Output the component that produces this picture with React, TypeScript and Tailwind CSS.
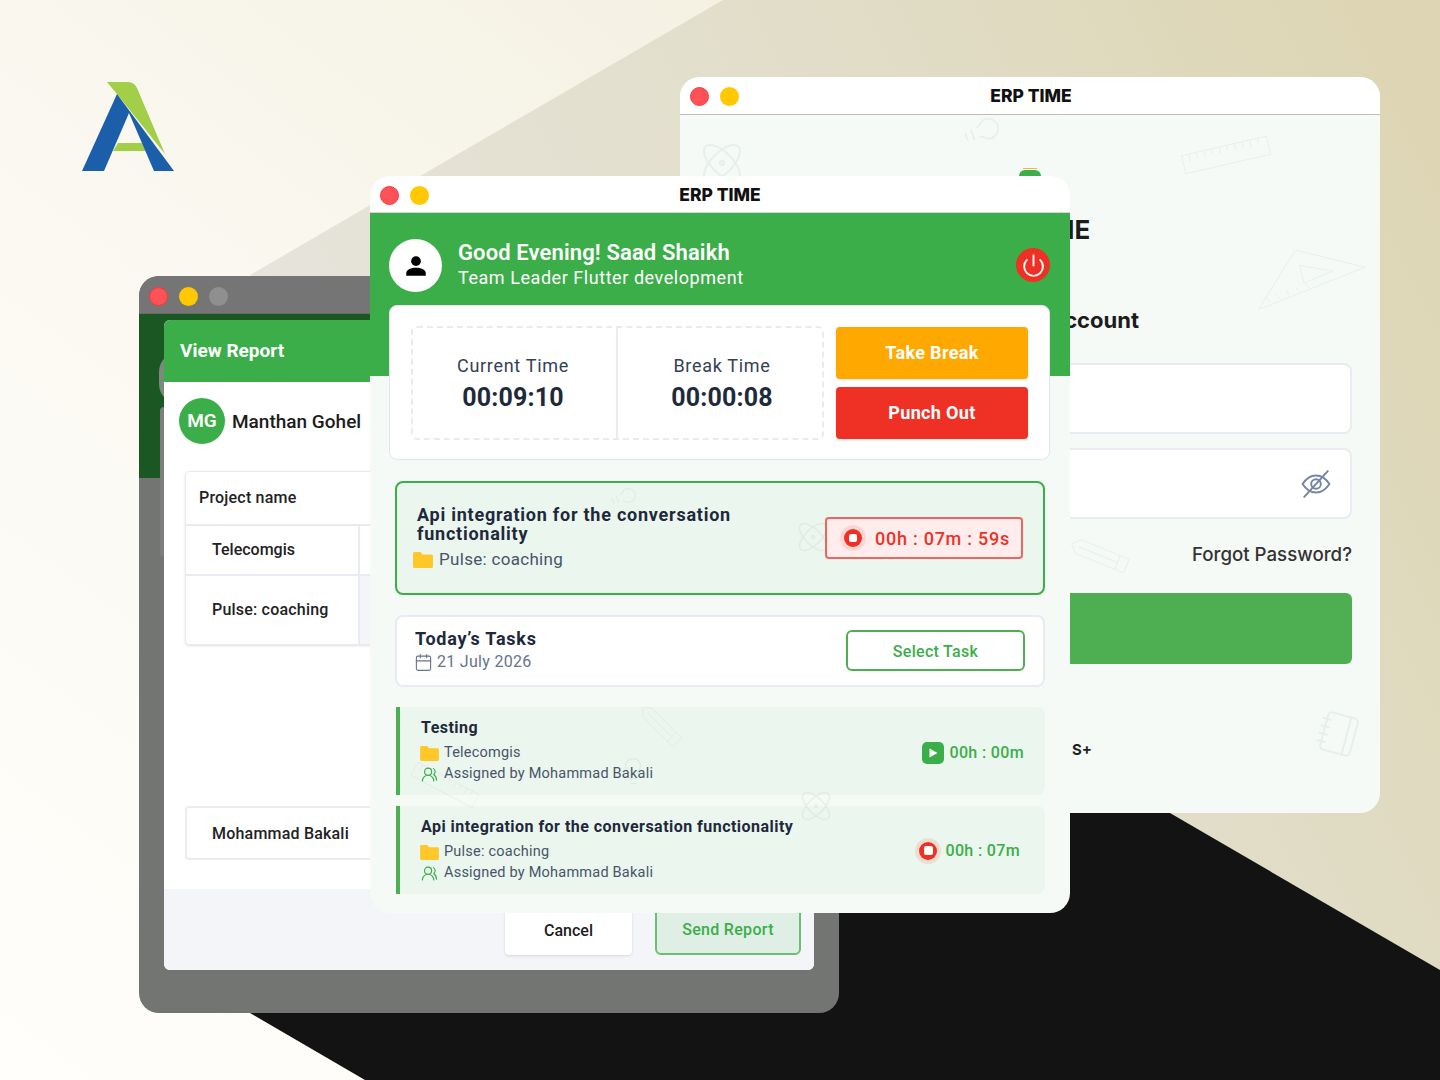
import React from 'react';
import { Atom, Calendar, Lightbulb, Notebook, Power, UsersRound } from 'lucide-react';

const plex = "font-['Roboto','Liberation_Sans',sans-serif]";

const Dots: React.FC<{ third?: boolean }> = ({ third }) => (
    <div className="flex gap-[11px]">
        <span className="w-[19px] h-[19px] rounded-full bg-[#ff5257] border border-[#f0393f]"></span>
        <span className="w-[19px] h-[19px] rounded-full bg-[#ffc801]"></span>
        {third && <span className="w-[19px] h-[19px] rounded-full bg-[#8f8f8f]"></span>}
    </div>
);

const Folder: React.FC<{ className: string }> = ({ className }) => (
    <svg viewBox="0 0 20 16" className={className}>
        <path d="M1.500 0h6l2 2.500h9A1.500 1.500 0 0 1 20 4v10.500a1.500 1.500 0 0 1-1.500 1.500h-17A1.500 1.500 0 0 1 0 14.500V1.500A1.500 1.500 0 0 1 1.500 0z" fill="#ffc727" />
    </svg>
);

const StopIcon: React.FC<{ size: string; inner: string }> = ({ size, inner }) => (
    <span className={`${size} rounded-full bg-[#ee3124] flex items-center justify-center shadow-[0_0_0_4px_rgba(238,49,36,0.12)]`}>
        <span className={`${inner} bg-white rounded-[2px]`}></span>
    </span>
);

const Doodle: React.FC<{ icon: React.ElementType; pos: string }> = ({ icon: Icon, pos }) => (
    <Icon className={`absolute pointer-events-none text-[#7f9488] opacity-[0.1] ${pos}`} strokeWidth={1} />
);

// long school ruler, lucide's one is square and gets squashed
const RulerDoodle: React.FC<{ pos: string }> = ({ pos }) => (
    <svg viewBox="0 0 90 20" className={`absolute pointer-events-none opacity-[0.1] ${pos}`} fill="none" stroke="#7f9488" strokeWidth="1">
        <rect x="0.500" y="0.500" width="89" height="19" />
        <path d="M8 1v7M16 1v5M24 1v7M32 1v5M40 1v7M48 1v5M56 1v7M64 1v5M72 1v7M80 1v5" />
    </svg>
);

const SetSquareDoodle: React.FC<{ pos: string }> = ({ pos }) => (
    <svg viewBox="0 0 110 62" className={`absolute pointer-events-none opacity-[0.1] ${pos}`} fill="none" stroke="#7f9488" strokeWidth="1">
        <path d="M0.500 61L38 0.500L109 18Z" />
        <path d="M42 16L76 22L47 34Z" />
        <path d="M12 53l-4-5M22 50l-4-5M32 46l-4-5M42 43l-4-5M52 39l-4-5" />
    </svg>
);

const FlatPencilDoodle: React.FC<{ pos: string }> = ({ pos }) => (
    <svg viewBox="0 0 60 16" className={`absolute pointer-events-none opacity-[0.1] ${pos}`} fill="none" stroke="#7f9488" strokeWidth="1">
        <path d="M8 0.500H59.500V15.500H8L0.500 8Z" />
        <path d="M50 0.500V15.500M8 8H50" />
    </svg>
);

const Backdrop = () => (
    <svg viewBox="0 0 1440 1080" className="absolute inset-0 w-full h-full">
        <defs>
            <linearGradient id="base" x1="0" y1="1" x2="1" y2="0">
                <stop offset="0" stopColor="#fffefb" />
                <stop offset="0.45" stopColor="#faf8f0" />
                <stop offset="1" stopColor="#f0ebd8" />
            </linearGradient>
            <linearGradient id="beige" x1="250" y1="700" x2="1440" y2="100" gradientUnits="userSpaceOnUse">
                <stop offset="0" stopColor="#e8e6e1" />
                <stop offset="0.5" stopColor="#e2dfcd" />
                <stop offset="1" stopColor="#ddd5b3" />
            </linearGradient>
        </defs>
        <rect width="1440" height="1080" fill="url(#base)" />
        <polygon points="723,0 1440,0 1440,970 1170,813 250,275" fill="url(#beige)" />
        <polygon points="1170,813 1440,970 1440,1080 365,1080 250,1013 500,600" fill="#131313" />
        <path d="M107 82H128C132 82 135 84 137 88L165 154L117 94Z" fill="#a3ce47" />
        <path d="M118 143H142L146 151H113Z" fill="#a3ce47" />
        <path d="M117 94L174 171H154L129 113L104 171H82Z" fill="#1b5fab" />
    </svg>
);

const BackWindow = () => (
    <div className={`absolute left-[680px] top-[77px] w-[700px] h-[736px] rounded-[20px] overflow-hidden bg-[#f5faf6] ${plex}`}>
        <div className="h-[38px] bg-white border-b border-[#bdbdbd] flex items-center pt-[1px] px-[10px] relative">
            <Dots />
            <span className="absolute left-[351px] -translate-x-1/2 text-[17.500px] font-extrabold text-[#111] font-['Inter',sans-serif]">ERP TIME</span>
        </div>
        <Doodle icon={Lightbulb} pos="w-[40px] h-[40px] left-[282px] top-[34px] rotate-[70deg]" />
        <Doodle icon={Atom} pos="w-[48px] h-[48px] left-[18px] top-[62px]" />
        <RulerDoodle pos="w-[88px] h-[20px] left-[502px] top-[68px] -rotate-[13deg]" />
        <SetSquareDoodle pos="w-[108px] h-[62px] left-[578px] top-[172px]" />
        <FlatPencilDoodle pos="w-[62px] h-[16px] left-[388px] top-[470px] rotate-[22deg]" />
        <Doodle icon={Notebook} pos="w-[46px] h-[46px] left-[636px] top-[634px] rotate-[15deg]" />
        <div className="flex flex-col px-[28px] font-['Inter',sans-serif]">
            <div className="mx-auto mt-[53px] w-[22px] h-[8px] flex flex-col items-center">
                <span className="w-[14px] h-[3px] bg-[#fbb03b] mb-[1px]"></span>
                <span className="w-[22px] h-[12px] rounded-t-full bg-[#3bae49]"></span>
            </div>
            <h1 className="mt-[36px] h-[36px] leading-[36px] text-center text-[26px] font-bold text-[#1c1c1c]">ERP TIME</h1>
            <h2 className="mt-[56px] h-[32px] leading-[32px] pr-[213px] text-right text-[22px] font-bold text-[#1c1c1c] whitespace-nowrap">Login to your account</h2>
            <div className="mt-[27px] h-[71px] rounded-[8px] bg-white border-2 border-[#e8ebf2]"></div>
            <div className="mt-[14px] h-[71px] rounded-[8px] bg-white border-2 border-[#e8ebf2] flex items-center justify-end pr-[19px]">
                <svg viewBox="0 0 28 28" className="w-[30px] h-[30px]" fill="none" stroke="#7385a5" strokeWidth="1.800" strokeLinecap="round">
                    <path d="M1.500 14C5 8.500 9 6 14 6s9 2.500 12.500 8C23 19.500 19 22 14 22S5 19.500 1.500 14z" />
                    <circle cx="14" cy="14" r="4.500" />
                    <path d="M25 2L3 26" />
                </svg>
            </div>
            <p className="mt-[24px] text-right text-[18.700px] leading-[24px] font-medium text-[#333]">Forgot Password?</p>
            <div className="mt-[26px] h-[71px] rounded-[6px] bg-[#4daf51]"></div>
            <p className="mt-[75px] pr-[260px] text-right text-[15px] leading-[22px] font-bold text-[#222] whitespace-nowrap">S+</p>
        </div>
    </div>
);

const ReportWindow = () => (
    <div className={`absolute left-[139px] top-[276px] w-[700px] h-[737px] rounded-[20px] overflow-hidden bg-[#737573] ${plex}`}>
        <div className="h-[38px] bg-[#757575] flex items-center pt-[3px] px-[10px] border-b border-[#6a6a6a]">
            <Dots third />
        </div>
        <div className="h-[164px] bg-[#1a5722] relative">
            <span className="absolute left-[20px] top-[38px] w-[40px] h-[52px] rounded-full bg-[#7b8a7e]"></span>
        </div>
        <span className="absolute left-[21px] top-[131px] w-[10px] h-[150px] rounded-[4px] bg-[#7d7f7d]"></span>
        <div className="absolute left-[25px] top-[44px] w-[650px] h-[650px] rounded-[6px] bg-white overflow-hidden flex flex-col">
            <div className="h-[62px] bg-[#3bae49] flex items-center px-[16px] text-[19px] font-bold text-white">View Report</div>
            <div className="flex items-center mt-[16px] ml-[15px] gap-[7px]">
                <span className="w-[46px] h-[46px] rounded-full bg-[#3bae49] flex items-center justify-center text-[19px] font-semibold text-white">MG</span>
                <span className="text-[19px] font-medium text-[#1c1c1c] pt-[2px]">Manthan Gohel</span>
            </div>
            <div className="mt-[27px] ml-[21px] w-[400px] h-[174px] rounded-[4px] border border-[#e8ebf2] text-[#222] shadow-sm">
                <div className="h-[54px] flex items-center px-[13px] border-b-2 border-[#e8ebf2] text-[16px] font-medium tracking-[0.2px]">Project name</div>
                <div className="h-[50px] flex border-b-2 border-[#e8ebf2]">
                    <div className="w-[174px] border-r-2 border-[#e8ebf2] flex items-center pl-[26px] text-[16px] font-medium">Telecomgis</div>
                </div>
                <div className="h-[68px] flex">
                    <div className="w-[174px] border-r-2 border-[#e8ebf2] flex items-center pl-[26px] text-[16px] font-medium tracking-[0.2px]">Pulse: coaching</div>
                    <div className="flex-1 bg-[#f3f5f9]"></div>
                </div>
            </div>
            <div className="mt-[161px] ml-[21px] w-[400px] h-[54px] rounded-[4px] border-2 border-[#ececf0] flex items-center pl-[25px] pt-[1px] text-[16px] font-medium text-[#222] tracking-[0.2px]">Mohammad Bakali</div>
            <div className="mt-[29px] flex-1 bg-[#f3f5f9] flex justify-end gap-[23px] pt-[9px] pr-[13px]">
                <button className="w-[127px] h-[59px] -mt-[2px] rounded-[4px] bg-white shadow-sm text-[16px] font-medium text-[#1c1c1c] pt-[11px]">Cancel</button>
                <button className="w-[146px] h-[59px] -mt-[2px] rounded-[6px] bg-[#e0efe6] border-2 border-[#69c073] text-[16px] font-medium text-[#3bae49] pt-[9px] tracking-[0.3px]">Send Report</button>
            </div>
        </div>
    </div>
);

interface TaskProps {
    title: string;
    project: string;
    time: string;
    running?: boolean;
}

const TaskRow: React.FC<TaskProps> = ({ title, project, time, running }) => (
    <div className="h-[88px] ml-[1px] rounded-r-[8px] bg-[#e8f5ec]/80 border-l-[4px] border-[#4daf51] flex items-center justify-between pl-[21px] relative">
        <div className="flex flex-col">
            <span className="text-[16px] leading-[20px] font-bold text-[#1e293b] tracking-[0.47px]">{title}</span>
            <div className="flex items-center mt-[5px] h-[21px] text-[14.500px] text-[#475569] tracking-[0.22px]">
                <Folder className="w-[19px] h-[15px] -ml-[1px] mr-[5px]" />
                {project}
            </div>
            <div className="flex items-center h-[21px] text-[14.500px] text-[#475569] tracking-[0.22px]">
                <UsersRound className="w-[17px] h-[17px] mr-[6px] text-[#3bae49]" strokeWidth={1.6} />
                Assigned by Mohammad Bakali
            </div>
        </div>
        {running ? (
            <div className="flex items-center gap-[8px] pr-[25px] pt-[1px] text-[16px] font-medium text-[#3bae49] tracking-[0.35px]">
                <StopIcon size="w-[18px] h-[18px]" inner="w-[9px] h-[9px]" />
                {time}
            </div>
        ) : (
            <div className="flex items-center gap-[5px] pr-[21px] pt-[3px] text-[16px] font-medium text-[#3bae49] tracking-[0.35px]">
                <span className="w-[22px] h-[22px] rounded-[5px] bg-[#3bae49] flex items-center justify-center">
                    <svg viewBox="0 0 10 10" className="w-[10px] h-[10px]"><path d="M1.500 0.500L9.500 5L1.500 9.500Z" fill="#fff" /></svg>
                </span>
                {time}
            </div>
        )}
    </div>
);

const MainWindow = () => (
    <div className={`absolute left-[370px] top-[176px] w-[700px] h-[737px] rounded-[20px] overflow-hidden bg-[#f5faf6] flex flex-col ${plex}`}>
        <div className="h-[37px] shrink-0 bg-white border-b border-[#d4d4d4] flex items-center pt-[2px] px-[10px] relative">
            <Dots />
            <span className="absolute left-1/2 -translate-x-1/2 text-[17.500px] font-extrabold text-[#111] font-['Inter',sans-serif]">ERP TIME</span>
        </div>
        <div className="h-[163px] shrink-0 bg-[#3bae49] flex items-start pl-[19px] pr-[20px] pt-[26px]">
            <span className="w-[53px] h-[53px] rounded-full bg-white flex items-center justify-center">
                <svg viewBox="0 0 24 24" className="w-[26px] h-[26px]" fill="#000">
                    <circle cx="12" cy="7.500" r="4.500" />
                    <path d="M3 21v-2.500C3 15 8 13.500 12 13.500s9 1.500 9 5V21z" />
                </svg>
            </span>
            <div className="ml-[16px] flex-1 text-white">
                <p className="text-[22px] leading-[28px] font-semibold tracking-[0.12px]">Good Evening! Saad Shaikh</p>
                <p className="text-[18px] leading-[22px] tracking-[0.55px]">Team Leader Flutter development</p>
            </div>
            <span className="w-[34px] h-[34px] mt-[9px] rounded-full bg-[#ee3124] flex items-center justify-center">
                <Power className="w-[25px] h-[25px] text-white" strokeWidth={1.800} />
            </span>
        </div>
        <div className="relative -mt-[71px] ml-[19px] mr-[20px] h-[155px] shrink-0 bg-white rounded-[8px] border border-[#e2e5ee] flex pl-[21px] pt-[20px]">
            <div className="w-[413px] h-[114px] rounded-[6px] border-2 border-dashed border-[#e8ebf2] flex text-center">
                <div className="w-[205px] border-r-2 border-[#e8ebf2] pt-[26px] pr-[3px]">
                    <p className="text-[18px] leading-[24px] text-[#334155] tracking-[0.7px]">Current Time</p>
                    <p className="mt-[3px] text-[25px] leading-[34px] font-bold text-[#1e293b] tracking-[0.2px]">00:09:10</p>
                </div>
                <div className="flex-1 pt-[26px] pl-[4px]">
                    <p className="text-[18px] leading-[24px] text-[#334155] tracking-[0.7px]">Break Time</p>
                    <p className="mt-[3px] text-[25px] leading-[34px] font-bold text-[#1e293b] tracking-[0.2px]">00:00:08</p>
                </div>
            </div>
            <div className="ml-[12px] mt-[1px] w-[192px] flex flex-col gap-[8px] text-[18px] font-bold text-white tracking-[0.35px]">
                <div className="h-[52px] pb-[2px] rounded-[4px] bg-[#ffa800] flex items-center justify-center shadow-sm">Take Break</div>
                <div className="h-[52px] pb-[2px] rounded-[4px] bg-[#ee3124] flex items-center justify-center shadow-sm">Punch Out</div>
            </div>
        </div>
        <div className="mt-[21px] mx-[25px] h-[114px] shrink-0 rounded-[8px] border-2 border-[#3bae49] bg-[#ebf6ee] flex items-center justify-between pl-[20px] pr-[20px]">
            <div className="w-[390px]">
                <p className="text-[18px] leading-[19px] font-bold text-[#1e293b] tracking-[0.76px]">Api integration for the conversation functionality</p>
                <div className="flex items-center mt-[5px] -ml-[4px] h-[24px] text-[17px] text-[#475569] tracking-[0.3px]">
                    <Folder className="w-[20px] h-[16px] mr-[6px]" />
                    Pulse: coaching
                </div>
            </div>
            <div className="w-[198px] h-[42px] rounded-[4px] border-2 border-[#f0665e] bg-[#ffecec] flex items-center pl-[17px] gap-[13px] text-[18px] font-medium text-[#ee3124] tracking-[0.75px]">
                <StopIcon size="w-[18px] h-[18px]" inner="w-[8px] h-[8px]" />
                00h : 07m : 59s
            </div>
        </div>
        <div className="mt-[20px] mx-[25px] h-[72px] shrink-0 rounded-[8px] border-2 border-[#e8ebf2] bg-white flex items-center justify-between pl-[18px] pr-[18px]">
            <div className="-mt-[3px]">
                <p className="text-[18px] leading-[24px] font-bold text-[#1e293b] tracking-[0.75px]">Today’s Tasks</p>
                <div className="flex items-center -ml-[1px] mt-[1px] h-[20px] text-[16px] text-[#64748b] tracking-[0.3px]">
                    <Calendar className="w-[19px] h-[19px] mr-[4px]" strokeWidth={1.400} />
                    21 July 2026
                </div>
            </div>
            <div className="w-[179px] h-[41px] -mt-[1px] pt-[2px] rounded-[6px] border-2 border-[#4daf51] bg-white flex items-center justify-center text-[16px] font-medium text-[#3bae49] tracking-[0.3px]">Select Task</div>
        </div>
        <div className="mt-[20px] mx-[25px] flex flex-col gap-[11px]">
            <TaskRow title="Testing" project="Telecomgis" time="00h : 00m" />
            <TaskRow title="Api integration for the conversation functionality" project="Pulse: coaching" time="00h : 07m" running />
        </div>
        <Doodle icon={Atom} pos="w-[36px] h-[36px] left-[425px] top-[343px]" />
        <FlatPencilDoodle pos="w-[50px] h-[14px] left-[265px] top-[542px] rotate-[45deg]" />
        <Doodle icon={Lightbulb} pos="w-[30px] h-[30px] left-[248px] top-[580px]" />
        <RulerDoodle pos="w-[70px] h-[18px] left-[40px] top-[600px] rotate-[28deg]" />
        <Doodle icon={Atom} pos="w-[36px] h-[36px] left-[428px] top-[612px]" />
        <Doodle icon={Lightbulb} pos="w-[28px] h-[28px] left-[240px] top-[307px] rotate-[70deg]" />
    </div>
);

export default function App() {
    return (
        <div className="relative w-[1440px] h-[1080px] overflow-hidden">
            <Backdrop />
            <BackWindow />
            <ReportWindow />
            <MainWindow />
        </div>
    );
}
